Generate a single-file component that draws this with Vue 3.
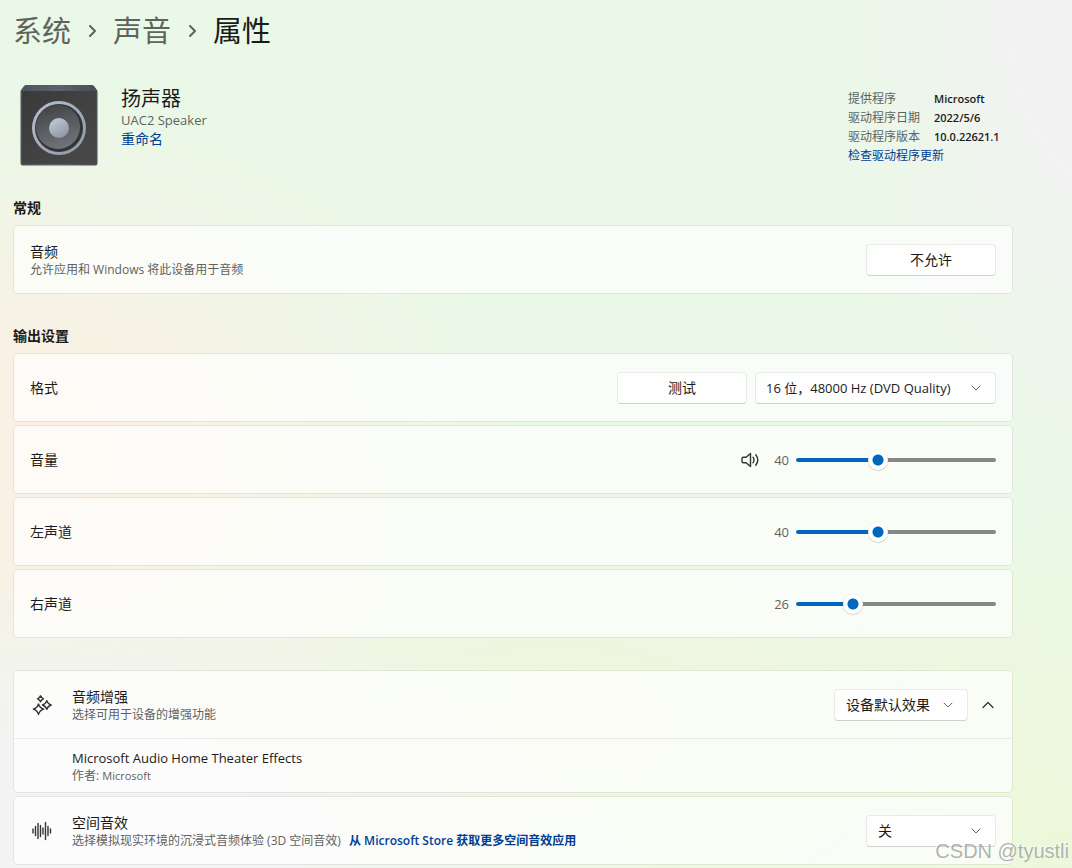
<template>
  <div class="page">
    <main class="content">
      <nav class="breadcrumb" aria-label="导航">
        <a href="#system">系统</a>
        <svg viewBox="0 0 12 12" aria-hidden="true"><path d="M4 1l5 5-5 5" /></svg>
        <a href="#sound">声音</a>
        <svg viewBox="0 0 12 12" aria-hidden="true"><path d="M4 1l5 5-5 5" /></svg>
        <h1>属性</h1>
      </nav>

      <header class="device">
        <svg class="device-icon" viewBox="0 0 78 82" aria-hidden="true">
          <defs>
            <linearGradient id="box" x1="0" y1="0" x2="1" y2="1">
              <stop offset="0" stop-color="#3a3a3b" />
              <stop offset="1" stop-color="#4a4949" />
            </linearGradient>
            <linearGradient id="lid" x1="0" y1="0" x2="1" y2="0">
              <stop offset="0" stop-color="#4d535c" />
              <stop offset="0.5" stop-color="#5c636e" />
              <stop offset="1" stop-color="#474c55" />
            </linearGradient>
            <linearGradient id="ring" x1="0" y1="0" x2="1" y2="1">
              <stop offset="0" stop-color="#b9c3cf" />
              <stop offset="1" stop-color="#8d96a2" />
            </linearGradient>
            <linearGradient id="cone" x1="0.3" y1="0" x2="0.6" y2="1">
              <stop offset="0" stop-color="#434446" />
              <stop offset="1" stop-color="#717579" />
            </linearGradient>
            <linearGradient id="cap" x1="0.2" y1="0" x2="0.8" y2="1">
              <stop offset="0" stop-color="#c0cbd8" />
              <stop offset="1" stop-color="#8b95a1" />
            </linearGradient>
          </defs>
          <path d="M6 1h66q1 0 2 1l3 4q.5 1 .5 2v71q0 2.500-2.500 2.500H3Q.5 81.500.5 79V8q0-1 .5-2l3-4q1-1 2-1z" fill="url(#lid)" />
          <rect x="2" y="7" width="74" height="73" rx="2" fill="url(#box)" />
          <circle cx="39" cy="44" r="27" fill="url(#ring)" />
          <circle cx="39" cy="44" r="24" fill="#343536" />
          <circle cx="38" cy="43" r="22" fill="url(#cone)" />
          <circle cx="39" cy="44" r="10" fill="url(#cap)" />
        </svg>
        <div class="device-name">
          <h2>扬声器</h2>
          <p>UAC2 Speaker</p>
          <a href="#rename">重命名</a>
        </div>
        <div class="driver">
          <dl>
            <template v-for="item in driver" :key="item.label">
              <dt>{{ item.label }}</dt>
              <dd>{{ item.value }}</dd>
            </template>
          </dl>
          <a href="#update">检查驱动程序更新</a>
        </div>
      </header>

      <section>
        <h3>常规</h3>
        <div class="card row">
          <div class="label">
            <strong>音频</strong>
            <small>允许应用和 Windows 将此设备用于音频</small>
          </div>
          <button type="button" class="btn">不允许</button>
        </div>
      </section>

      <section>
        <h3>输出设置</h3>
        <div class="stack">
          <div class="card row">
            <label class="label" for="format">格式</label>
            <div class="actions">
              <button type="button" class="btn">测试</button>
              <div class="select format">
                <select id="format" v-model="format">
                  <option>16 位，48000 Hz (DVD Quality)</option>
                </select>
                <svg viewBox="0 0 12 12" aria-hidden="true"><path d="M2 4l4 4 4-4" /></svg>
              </div>
            </div>
          </div>
          <div v-for="s in sliders" :key="s.id" class="card row">
            <label class="label" :for="s.id">{{ s.label }}</label>
            <div class="volume">
              <button v-if="s.mute" type="button" class="icon-btn" aria-label="静音">
                <svg class="speaker" viewBox="0 0 20 20" aria-hidden="true">
                  <path d="M10.500 3.500v13L6 12.800H3.500q-1.500 0-1.500-1.500V8.700q0-1.500 1.500-1.500H6z" />
                  <path d="M13 7.200q2 2.800 0 5.600M15.800 4.800q4 5.200 0 10.400" />
                </svg>
              </button>
              <output :for="s.id">{{ s.value }}</output>
              <input
                :id="s.id"
                v-model.number="s.value"
                type="range"
                min="0"
                max="100"
                :style="{ '--fill': s.value + '%' }"
              />
            </div>
          </div>
        </div>
      </section>

      <section class="stack">
        <div class="card">
          <div class="row">
            <svg class="row-icon" viewBox="0 0 20 20" aria-hidden="true">
              <path d="M8.500 0.800q.8 2.200 3 3-2.200.8-3 3-.8-2.200-3-3 2.200-.8 3-3z" />
              <path d="M14.800 5.600q1 3.400 4.400 4.400-3.400 1-4.400 4.400-1-3.400-4.400-4.400 3.400-1 4.400-4.400z" />
              <path d="M6.500 9q1.200 4 5.200 5.200-4 1.200-5.200 5.200-1.200-4-5.200-5.200 4-1.200 5.200-5.200z" />
            </svg>
            <div class="label">
              <label for="enhance">音频增强</label>
              <small>选择可用于设备的增强功能</small>
            </div>
            <div class="actions">
              <div class="select enhance">
                <select id="enhance" v-model="enhance">
                  <option>设备默认效果</option>
                </select>
                <svg viewBox="0 0 12 12" aria-hidden="true"><path d="M2 4l4 4 4-4" /></svg>
              </div>
              <button type="button" class="icon-btn collapse" aria-label="折叠">
                <svg viewBox="0 0 12 12" aria-hidden="true"><path d="M1 8.500l5-5 5 5" /></svg>
              </button>
            </div>
          </div>
          <div class="detail">
            <strong class="latin">Microsoft Audio Home Theater Effects</strong>
            <small>作者: <span>Microsoft</span></small>
          </div>
        </div>

        <div class="card row">
          <svg class="row-icon" viewBox="0 0 20 20" aria-hidden="true">
            <path d="M1 8v4M3.500 5.500v9M6 2.500v15M8.500 4.500v11M11 7v6M13.500 1.500v17M16 5.500v9M18.500 8v4" />
          </svg>
          <div class="label">
            <label for="spatial">空间音效</label>
            <small>
              选择模拟现实环境的沉浸式音频体验 (3D 空间音效)
              <a href="#store">从 Microsoft Store 获取更多空间音效应用</a>
            </small>
          </div>
          <div class="select spatial">
            <select id="spatial" v-model="spatial">
              <option>关</option>
            </select>
            <svg viewBox="0 0 12 12" aria-hidden="true"><path d="M2 4l4 4 4-4" /></svg>
          </div>
        </div>
      </section>
    </main>
    <span class="watermark">CSDN @tyustli</span>
  </div>
</template>

<script setup>
import { ref } from "vue";

const driver = [
  { label: "提供程序", value: "Microsoft" },
  { label: "驱动程序日期", value: "2022/5/6" },
  { label: "驱动程序版本", value: "10.0.22621.1" }
];

const format = ref("16 位，48000 Hz (DVD Quality)");
const enhance = ref("设备默认效果");
const spatial = ref("关");

const sliders = ref([
  { id: "volume", label: "音量", value: 40, mute: true },
  { id: "left", label: "左声道", value: 40 },
  { id: "right", label: "右声道", value: 26 }
]);
</script>

<style>
body {
  margin: 0;
}
</style>

<style scoped>
.page {
  position: relative;
  box-sizing: border-box;
  min-height: 100vh;
  padding: 12px 13px 3px;
  font-family: "Open Sans", "Noto Sans CJK SC", sans-serif;
  font-size: 14px;
  color: #1b1b1b;
  background:
    radial-gradient(ellipse 28% 60% at 104% 0%, #f3f2f3 30%, rgba(243, 242, 243, 0.4) 65%, rgba(243, 242, 243, 0) 100%),
    radial-gradient(ellipse 64% 34% at 0% 100%, #f3f3f3 40%, rgba(243, 243, 243, 0.4) 75%, rgba(243, 243, 243, 0) 100%),
    radial-gradient(ellipse 46% 42% at 2% 52%, #fbf0e4 15%, rgba(251, 240, 228, 0.5) 55%, rgba(251, 240, 228, 0) 100%),
    radial-gradient(ellipse 55% 36% at 52% 84%, #f0f5de 10%, rgba(240, 245, 222, 0) 100%),
    radial-gradient(ellipse 30% 40% at 100% 100%, #ecf8da 10%, rgba(236, 248, 218, 0) 100%),
    #eaf8e7;
}

.content {
  max-width: 1000px;
}

h1,
h2,
h3,
p,
dl,
dd {
  margin: 0;
  font-weight: 400;
}

a {
  color: #003e92;
  text-decoration: none;
}

svg {
  fill: none;
  stroke: #333;
  stroke-linecap: round;
  stroke-linejoin: round;
}

.breadcrumb {
  display: flex;
  align-items: center;
  font-size: 29px;
  line-height: 38px;
}

.breadcrumb a {
  color: #5e645d;
}

.breadcrumb h1 {
  font-size: 29px;
}

.breadcrumb svg {
  width: 12px;
  height: 12px;
  margin: 0 15px;
  stroke: #5e645d;
  stroke-width: 2;
}

.device {
  display: flex;
  align-items: flex-start;
  margin: 34px 0 32px;
  padding-left: 7px;
}

.device-icon {
  width: 78px;
  height: 82px;
  stroke: none;
}

.device-name {
  flex: 1;
  margin-left: 23px;
  padding-top: 3px;
  line-height: 20px;
}

.device-name h2 {
  font-size: 20px;
  line-height: 24px;
}

.device-name p {
  font-size: 13px;
  line-height: 18px;
  color: #5e645d;
}

.driver {
  width: 165px;
  padding-top: 5px;
  font-size: 12px;
  line-height: 19px;
}

.driver dl {
  display: grid;
  grid-template-columns: 72px 1fr;
  column-gap: 14px;
}

.driver dt {
  color: #5e645d;
}

.driver dd {
  font-size: 11px;
  font-weight: 600;
}

section {
  margin-top: 32px;
}

h3 {
  margin-bottom: 7px;
  font-size: 14px;
  font-weight: 600;
  line-height: 20px;
}

.stack {
  display: flex;
  flex-direction: column;
  gap: 3px;
}

.card {
  box-sizing: border-box;
  border: 1px solid rgba(0, 0, 0, 0.06);
  border-radius: 5px;
  background: rgba(255, 255, 255, 0.7);
  background-clip: padding-box;
}

.row {
  display: flex;
  align-items: center;
  box-sizing: border-box;
  min-height: 67px;
  padding: 0 16px;
}

.card.row {
  min-height: 69px;
}

.row-icon {
  width: 20px;
  height: 20px;
  margin: 0 20px 0 2px;
  stroke-width: 1.4;
}

.label {
  display: flex;
  flex: 1;
  flex-direction: column;
  line-height: 20px;
}

strong {
  font-weight: 400;
}

.latin {
  font-size: 13px;
}

small {
  font-size: 12px;
  line-height: 16px;
  color: #5f625f;
}

small span {
  font-size: 11px;
}

small a {
  margin-left: 5px;
  font-weight: 600;
}

.actions,
.volume {
  display: flex;
  align-items: center;
}

.actions {
  gap: 8px;
}

.btn,
.select select {
  box-sizing: border-box;
  height: 32px;
  border: 1px solid rgba(0, 0, 0, 0.07);
  border-bottom-color: rgba(0, 0, 0, 0.17);
  border-radius: 4px;
  background: #fefefe;
  background-clip: padding-box;
  font: inherit;
  color: inherit;
}

.btn {
  width: 130px;
  padding: 0 0 2px;
}

.select {
  position: relative;
}

.select select {
  width: 100%;
  padding: 0 32px 0 11px;
  appearance: none;
}

.select svg {
  position: absolute;
  top: 10px;
  right: 14px;
  width: 12px;
  height: 12px;
  stroke: #666;
  pointer-events: none;
}

.format {
  width: 241px;
}

.select.format select {
  padding-left: 10px;
  font-size: 13px;
}

.enhance {
  width: 134px;
}

.spatial {
  width: 130px;
}

.icon-btn {
  display: flex;
  padding: 0;
  border: 0;
  background: none;
}

.collapse svg {
  width: 12px;
  height: 12px;
  margin: 0 2px 0 6px;
  stroke-width: 1.3;
}

.speaker {
  width: 20px;
  height: 20px;
  margin-right: 14px;
  stroke-width: 1.4;
}

output {
  margin-right: 7px;
  font-size: 13px;
  color: #5f625f;
}

input[type="range"] {
  width: 200px;
  height: 22px;
  margin: 0;
  appearance: none;
  background: none;
}

input[type="range"]::-webkit-slider-runnable-track {
  height: 4px;
  border-radius: 2px;
  background: linear-gradient(to right, #0067c0 var(--fill), #868986 var(--fill));
}

input[type="range"]::-webkit-slider-thumb {
  width: 20px;
  height: 20px;
  margin-top: -8px;
  border-radius: 50%;
  appearance: none;
  background: radial-gradient(circle, #0067c0 5px, #fff 6px);
  box-shadow: 0 0 1px rgba(0, 0, 0, 0.25), 0 1px 1px rgba(0, 0, 0, 0.15);
}

.detail {
  display: flex;
  flex-direction: column;
  padding: 9px 57px 8px 58px;
  border-top: 1px solid rgba(0, 0, 0, 0.07);
  line-height: 20px;
}

.watermark {
  position: absolute;
  right: 3px;
  bottom: 5px;
  font-family: "Liberation Sans", sans-serif;
  font-size: 20px;
  line-height: 24px;
  color: rgba(150, 155, 150, 0.75);
  text-shadow: -1px -1px 0 rgba(255, 255, 255, 0.8);
}
</style>
